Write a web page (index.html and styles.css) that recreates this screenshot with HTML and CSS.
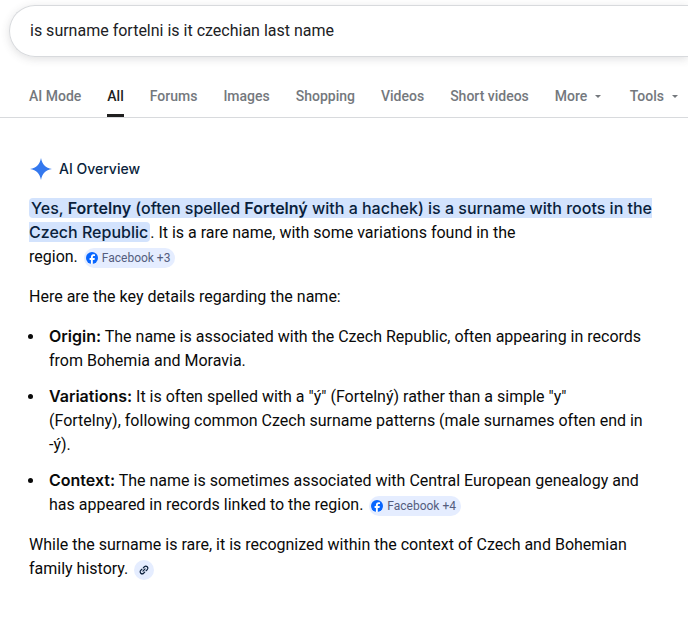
FILE: index.html
```html
<!DOCTYPE html>
<html lang="en">
<head>
<meta charset="utf-8">
<title>is surname fortelni is it czechian last name</title>
<link rel="stylesheet" href="styles.css">
</head>
<body>
<svg class="defs" aria-hidden="true">
  <symbol id="fb" viewBox="0 0 12 12">
    <circle cx="6" cy="6" r="6" fill="#0866ff"/>
    <path fill="#fff" d="M4.900 12V7.900H3.600V6.100h1.300V5.200c0-2 .9-3 2.900-3 .4 0 .9.1 1.200.2v1.600h-.8c-1 0-1.400.4-1.400 1.300v.8h2l-.3 1.800H6.800V12z"/>
  </symbol>
</svg>
<header>
  <form class="search" role="search">
    <input class="query" type="text" aria-label="Search" value="is surname fortelni is it czechian last name">
  </form>
  <nav class="tabs">
    <a href="#">AI Mode</a>
    <a href="#" class="active" aria-current="page">All</a>
    <a href="#">Forums</a>
    <a href="#">Images</a>
    <a href="#">Shopping</a>
    <a href="#">Videos</a>
    <a href="#">Short videos</a>
    <button type="button" class="menu">More<span class="caret"></span></button>
    <button type="button" class="menu tools">Tools<span class="caret"></span></button>
  </nav>
</header>
<main class="overview">
  <h1 class="title">
    <svg class="spark" viewBox="0 0 24 24" aria-hidden="true"><path fill="#3478ee" d="M12 1C13.200 7.600 16.400 10.800 23 12 16.400 13.200 13.200 16.400 12 23 10.800 16.400 7.600 13.200 1 12 7.600 10.800 10.800 7.600 12 1z"/></svg>
    AI Overview
  </h1>
  <p><mark>Yes, <strong>Fortelny</strong> (often spelled <strong>Fortelný</strong> with a hachek) is a surname with roots in the<br>Czech Republic</mark>. It is a rare name, with some variations found in the<br>region. <button type="button" class="pill"><svg viewBox="0 0 12 12" aria-hidden="true"><use href="#fb"/></svg>Facebook +3</button></p>
  <p>Here are the key details regarding the name:</p>
  <ul>
    <li><strong>Origin:</strong> The name is associated with the Czech Republic, often appearing in records<br>from Bohemia and Moravia.</li>
    <li><strong>Variations:</strong> It is often spelled with a "ý" (Fortelný) rather than a simple "y"<br>(Fortelny), following common Czech surname patterns (male surnames often end in<br>-ý).</li>
    <li><strong>Context:</strong> The name is sometimes associated with Central European genealogy and<br>has appeared in records linked to the region. <button type="button" class="pill"><svg viewBox="0 0 12 12" aria-hidden="true"><use href="#fb"/></svg>Facebook +4</button></li>
  </ul>
  <p>While the surname is rare, it is recognized within the context of Czech and Bohemian<br>family history. <button type="button" class="pill link" aria-label="View related links"><svg viewBox="0 0 12 12" aria-hidden="true"><g transform="rotate(-45 6 6)" fill="none" stroke="#0a1f3c" stroke-width="1.200" stroke-linecap="round"><path d="M5 4H3.400a2 2 0 0 0 0 4H5M7 4h1.600a2 2 0 0 1 0 4H7M4.500 6h3"/></g></svg></button></p>
</main>
</body>
</html>
```
FILE: styles.css
```css
* { box-sizing: border-box; }
body {
  margin: 0;
  background: #fff;
  color: #0a0a0a;
  font-family: Roboto, "Liberation Sans", sans-serif;
  font-size: 16px;
  line-height: 24px;
}
.defs { display: none; }
.search {
  display: flex;
  height: 52px;
  margin: 5px 0 0 9px;
  padding: 0 20px;
  border: 1px solid #d8dadd;
  border-right: 0;
  border-radius: 26px 0 0 26px;
  box-shadow: 0 2px 8px rgba(60, 64, 67, 0.16);
}
.query {
  flex: 1;
  border: 0;
  padding: 0;
  outline: 0;
  background: none;
  color: #202124;
  font: inherit;
}
.tabs {
  display: flex;
  gap: 26px;
  margin-top: 19px;
  padding: 0 10px 0 29px;
  border-bottom: 1px solid #d8dadd;
  font-size: 14px;
  font-weight: 500;
  white-space: nowrap;
}
.tabs a, .menu {
  height: 41px;
  padding: 0;
  border: 0;
  background: none;
  color: #74787d;
  font: inherit;
  line-height: 40px;
  text-decoration: none;
}
.tabs .active { color: #1f1f1f; border-bottom: 3px solid #1f1f1f; }
.tabs .menu { display: flex; align-items: center; gap: 8px; height: 40px; }
.tabs .tools { margin-left: auto; }
.caret {
  border: 3px solid transparent;
  border-top-color: #74787d;
  border-bottom: 0;
}
.overview { padding: 39px 24px 36px 29px; }
.title {
  display: flex;
  align-items: center;
  gap: 6px;
  margin: 0 0 16px;
  color: #0a1f3c;
  font: 500 14px/24px Inter, Roboto, sans-serif;
}
.spark { width: 24px; height: 24px; }
p { margin: 0 0 16px; }
mark {
  padding: 0 2px;
  border-radius: 4px;
  background: #d3e3fd;
  color: #0a1f3c;
  font-family: Inter, Roboto, sans-serif;
  font-weight: 500;
  line-height: 20px;
}
strong {
  font-family: Inter, Roboto, sans-serif;
  font-weight: 600;
  line-height: 20px;
}
ul { margin: 0 0 16px; padding-left: 16px; }
li { margin-bottom: 12px; padding-left: 4px; }
.pill {
  display: inline-flex;
  align-items: center;
  gap: 4px;
  height: 20px;
  margin-left: 2px;
  padding: 0 5px 0 2px;
  border: 0;
  border-radius: 10px;
  background: #e5edff;
  color: #545d7e;
  font: 400 12px/20px Roboto, "Liberation Sans", sans-serif;
  vertical-align: middle;
}
.pill svg { width: 12px; height: 12px; }
.link { width: 20px; padding: 0 4px; }
```
